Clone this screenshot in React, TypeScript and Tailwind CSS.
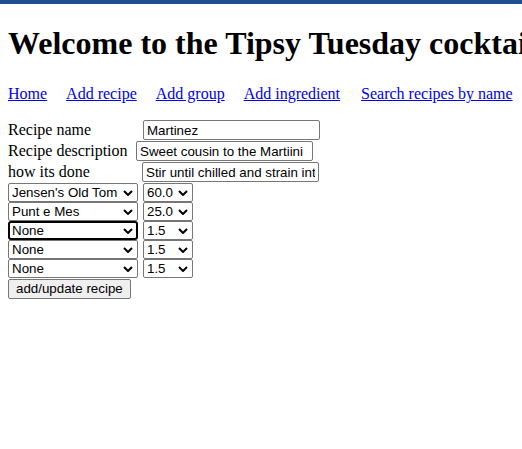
import React from "react";

const serif = "font-['Liberation_Serif','Times_New_Roman',serif]";
const sans = "font-['Liberation_Sans',Arial,sans-serif]";

const Chevron = () => (
  <svg
    width="10"
    height="6"
    viewBox="0 0 10 6"
    className="pointer-events-none absolute right-[5px] top-1/2 -translate-y-1/2"
  >
    <polyline points="1,1 5,5 9,1" fill="none" stroke="#000" strokeWidth="2" />
  </svg>
);

const Select = ({
  value,
  options,
  width,
  focused,
}: {
  value: string;
  options: string[];
  width: string;
  focused?: boolean;
}) => (
  <span className={`relative block h-[19px] ${width}`}>
    <select
      defaultValue={value}
      className={`${sans} block h-[19px] w-full appearance-none bg-white py-0 text-[13.33px] leading-[15px] text-black ${
        focused
          ? "rounded-[3px] border-2 border-black pl-[2px]"
          : "rounded-[2px] border border-[#767676] pl-[3px]"
      }`}
    >
      {options.map((o) => (
        <option key={o}>{o}</option>
      ))}
    </select>
    <Chevron />
  </span>
);

const ingredients = ["None", "Jensen's Old Tom", "Punt e Mes", "Maraschino", "Angostura"];
const amounts = ["1.5", "25.0", "60.0"];

const rows = [
  { ingredient: "Jensen's Old Tom", amount: "60.0" },
  { ingredient: "Punt e Mes", amount: "25.0" },
  { ingredient: "None", amount: "1.5", focused: true },
  { ingredient: "None", amount: "1.5" },
  { ingredient: "None", amount: "1.5" },
];

const fields = [
  { label: "Recipe name", width: "w-[135px]", value: "Martinez" },
  { label: "Recipe description", width: "w-[128px]", value: "Sweet cousin to the Martiini" },
  { label: "how its done", width: "w-[134px]", value: "Stir until chilled and strain into a coupe" },
];

export default function App() {
  return (
    <div className={`${serif} min-h-[449px] overflow-hidden bg-white text-[16px] text-black`}>
      <div className="h-[4px] bg-[#1d4f91]" />
      <div className="px-2">
        <h1 className="mt-[21px] whitespace-nowrap text-[32px] font-bold leading-[37px]">
          Welcome to the Tipsy Tuesday cocktail club
        </h1>
        <nav className="mt-[23px] flex gap-[19px] whitespace-nowrap leading-[18px] text-[#0000ee]">
          <a href="#" className="underline">Home</a>
          <a href="#" className="underline">Add recipe</a>
          <a href="#" className="underline">Add group</a>
          <a href="#" className="underline">Add ingredient</a>
          <a href="#" className="ml-[2px] underline">Search recipes by name</a>
        </nav>

        <form className="mt-[17px] flex flex-col">
          <div className="flex flex-col gap-[1px]">
            {fields.map((f) => (
              <div key={f.label} className="flex h-[20px] items-center whitespace-nowrap">
                <label className={`${f.width} leading-[18px]`}>{f.label}</label>
                <input
                  type="text"
                  defaultValue={f.value}
                  className={`${sans} block h-[20px] w-[177px] rounded-[2px] border border-[#767676] px-[3px] py-0 text-[13.33px] leading-[15px] text-black`}
                />
              </div>
            ))}
          </div>
          <div className="mt-[1px] flex flex-col">
            {rows.map((r, i) => (
              <div key={i} className="flex h-[19px] gap-[5px]">
                <Select value={r.ingredient} options={ingredients} width="w-[130px]" focused={r.focused} />
                <Select value={r.amount} options={amounts} width="w-[50px]" />
              </div>
            ))}
          </div>
          <div className="mt-[1px]">
            <button
              type="button"
              className={`${sans} block h-[20px] rounded-[2px] border border-[#767676] bg-[#efefef] px-[7px] text-[13.33px] leading-none text-black`}
            >
              add/update recipe
            </button>
          </div>
        </form>
      </div>
    </div>
  );
}
